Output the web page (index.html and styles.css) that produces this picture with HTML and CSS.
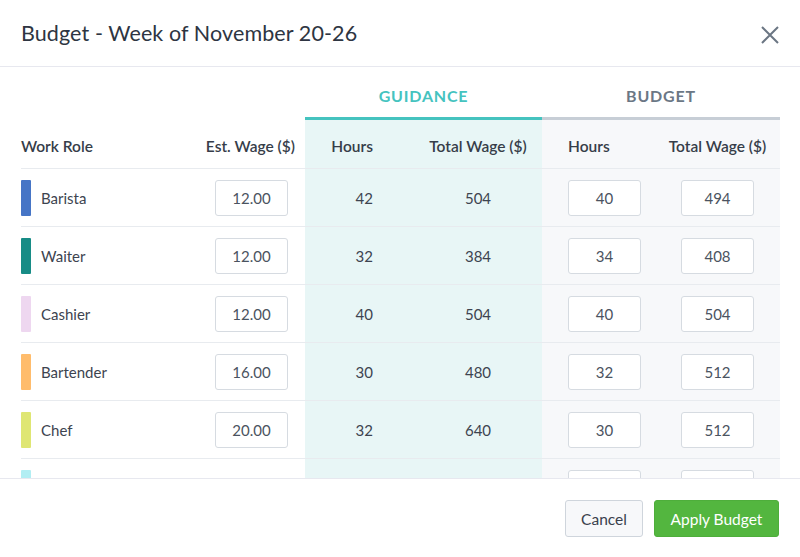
FILE: index.html
```html
<!DOCTYPE html>
<html lang="en">
<head>
  <meta charset="UTF-8">
  <title>Budget - Week of November 20-26</title>
  <link rel="stylesheet" href="styles.css">
</head>
<body>

<div class="modal">
  <header class="modal-header">
    <h1>Budget - Week of November 20-26</h1>
    <button class="close" aria-label="Close">
      <svg width="18" height="18" viewBox="0 0 18 18">
        <path d="M1 1 L17 17 M17 1 L1 17" stroke="#6b7683" stroke-width="2" fill="none"/>
      </svg>
    </button>
  </header>

  <section class="modal-body">
    <div class="grid group-row">
      <div class="span2"></div>
      <div class="group guidance">Guidance</div>
      <div class="group budget">Budget</div>
    </div>

    <div class="grid head-row">
      <div class="c-role">Work Role</div>
      <div class="c-wage">Est. Wage ($)</div>
      <div class="c-ghours g-bg">Hours</div>
      <div class="c-gtotal g-bg">Total Wage ($)</div>
      <div class="c-bhours b-bg">Hours</div>
      <div class="c-btotal b-bg">Total Wage ($)</div>
    </div>

    <div id="rows"></div>
  </section>

  <footer class="modal-footer">
    <button class="btn btn-cancel">Cancel</button>
    <button class="btn btn-apply">Apply Budget</button>
  </footer>
</div>

<script>
  const roles = [
    { name: "Barista", color: "#4675c6", wage: "12.00", gh: 42, gt: 504, bh: 40, bt: 494 },
    { name: "Waiter", color: "#178c86", wage: "12.00", gh: 32, gt: 384, bh: 34, bt: 408 },
    { name: "Cashier", color: "#eed7f0", wage: "12.00", gh: 40, gt: 504, bh: 40, bt: 504 },
    { name: "Bartender", color: "#ffbc6c", wage: "16.00", gh: 30, gt: 480, bh: 32, bt: 512 },
    { name: "Chef", color: "#dfe673", wage: "20.00", gh: 32, gt: 640, bh: 30, bt: 512 }
  ];

  const rows = document.getElementById("rows");

  roles.forEach(r => {
    const div = document.createElement("div");
    div.className = "grid data-row";
    div.innerHTML = `
      <div class="c-role"><span class="swatch" style="background:${r.color}"></span>${r.name}</div>
      <div class="c-wage"><input class="field" value="${r.wage}"></div>
      <div class="c-ghours g-bg">${r.gh}</div>
      <div class="c-gtotal g-bg">${r.gt}</div>
      <div class="c-bhours b-bg"><input class="field" value="${r.bh}"></div>
      <div class="c-btotal b-bg"><input class="field" value="${r.bt}"></div>
    `;
    rows.appendChild(div);
  });

  // next row, only its top shows above the footer
  const last = document.createElement("div");
  last.className = "grid data-row";
  last.innerHTML = `
    <div class="c-role"><span class="swatch" style="background:#b2eef3"></span></div>
    <div class="c-wage"></div>
    <div class="c-ghours g-bg"></div>
    <div class="c-gtotal g-bg"></div>
    <div class="c-bhours b-bg"><input class="field"></div>
    <div class="c-btotal b-bg"><input class="field"></div>
  `;
  rows.appendChild(last);
</script>

</body>
</html>
```

FILE: styles.css
```css
body {
  margin: 0;
  font-family: Lato, "Noto Sans", sans-serif;
  color: #3a414d;
  background: #fff;
}

.modal {
  width: 800px;
  height: 557px;
  display: flex;
  flex-direction: column;
  overflow: hidden;
}

.modal-header {
  height: 66px;
  flex: none;
  display: flex;
  align-items: center;
  justify-content: space-between;
  padding: 0 21px;
  border-bottom: 1px solid #e7e8ef;
}

.modal-header h1 {
  margin: 0;
  font-size: 21.5px;
  font-weight: 400;
  color: #2e3542;
  letter-spacing: 0.1px;
}

.close {
  background: none;
  border: none;
  padding: 0;
  margin-top: 4px;
  width: 18px;
  height: 18px;
  cursor: pointer;
}

.modal-body {
  flex: 1;
  overflow: hidden;
  padding: 0 20px 0 21px;
}

.grid {
  display: grid;
  grid-template-columns: 179px 105px 85px 152px 113px 125px;
}

.span2 {
  grid-column: span 2;
}

.group-row {
  height: 53px;
}

.group {
  grid-column: span 2;
  display: flex;
  align-items: center;
  justify-content: center;
  padding-top: 7px;
  text-transform: uppercase;
  font-size: 16px;
  font-weight: 700;
  letter-spacing: 0.8px;
}

.guidance {
  color: #45c3bf;
  border-bottom: 3px solid #45c3bf;
}

.budget {
  color: #6b7785;
  border-bottom: 3px solid #c7ced6;
}

.head-row > div {
  height: 49px;
  padding-top: 4px;
  box-sizing: border-box;
  display: flex;
  align-items: center;
  font-size: 15.5px;
  font-weight: 600;
  color: #363d49;
  border-bottom: 1px solid #e8ebef;
}

.data-row > div {
  height: 58px;
  box-sizing: border-box;
  display: flex;
  align-items: center;
  font-size: 15px;
  color: #3d4450;
  border-bottom: 1px solid #e8ebef;
}

.g-bg {
  background: #e8f6f6;
}

.b-bg {
  background: #f7f8fa;
}

.c-role {
  gap: 10px;
}

.swatch {
  width: 10px;
  height: 36px;
  border-radius: 1px;
}

.c-wage {
  justify-content: flex-end;
}

.head-row .c-wage {
  padding-right: 10px;
}

.data-row .c-wage {
  padding-right: 17px;
}

.c-ghours {
  justify-content: flex-end;
  padding-right: 17px;
}

.c-gtotal {
  justify-content: center;
  padding-left: 24px;
}

.c-bhours {
  padding-left: 26px;
}

.c-btotal {
  justify-content: center;
}

.field {
  width: 73px;
  height: 36px;
  box-sizing: border-box;
  border: 1px solid #d6dbe1;
  border-radius: 3px;
  background: #fff;
  text-align: center;
  font-family: inherit;
  font-size: 15px;
  color: #4b5360;
  padding: 0;
}

.modal-footer {
  height: 79px;
  flex: none;
  box-sizing: border-box;
  border-top: 1px solid #e7e8ef;
  display: flex;
  justify-content: flex-end;
  align-items: flex-start;
  gap: 11px;
  padding: 21px 21px 0 0;
}

.btn {
  height: 37px;
  border-radius: 3px;
  font-family: inherit;
  font-size: 15.5px;
  cursor: pointer;
}

.btn-cancel {
  width: 78px;
  background: #f7f8fa;
  border: 1px solid #cfd5dc;
  color: #3a414d;
}

.btn-apply {
  width: 125px;
  background: #53b63f;
  border: 1px solid #4eae3b;
  color: #fff;
}
```
